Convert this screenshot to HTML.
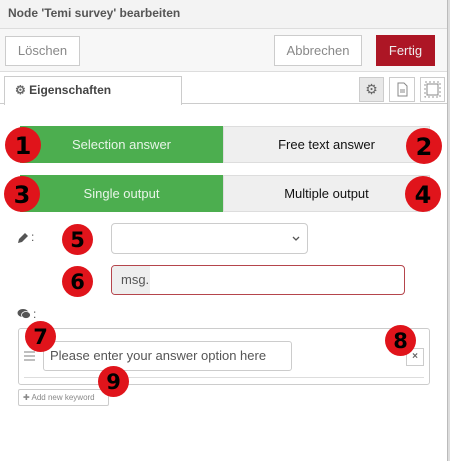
<!DOCTYPE html>
<html><head><meta charset="utf-8"><style>
*{box-sizing:border-box;margin:0;padding:0}
body{width:450px;height:461px;background:#fff;font-family:"Liberation Sans",sans-serif;position:relative;overflow:hidden}
.a{position:absolute}
.c{position:absolute;width:36px;height:36px;border-radius:50%;background:#e0141b;color:#000;font-weight:bold;font-size:24px;text-align:center;line-height:38px;font-family:"DejaVu Sans",sans-serif}
.cs{width:31px;height:31px;line-height:32px;font-size:21px}
</style></head><body>
<div class="a" style="left:0;top:0;width:447px;height:29px;background:#f3f3f3;border-bottom:1px solid #ddd"></div>
<div class="a" style="left:8px;top:6px;font-size:12px;font-weight:bold;color:#555">Node 'Temi survey' bearbeiten</div>
<div class="a" style="left:0;top:29px;width:447px;height:43px;background:#f7f7f7;border-bottom:1px solid #ddd"></div>
<div class="a" style="left:5px;top:36px;width:75px;height:30px;background:#fff;border:1px solid #ccc;font-size:13px;color:#888;text-align:center;line-height:28px">Löschen</div>
<div class="a" style="left:274px;top:35px;width:88px;height:31px;background:#fff;border:1px solid #ccc;font-size:13px;color:#888;text-align:center;line-height:29px">Abbrechen</div>
<div class="a" style="left:376px;top:35px;width:59px;height:31px;background:#ad1625;font-size:13px;color:#eee;text-align:center;line-height:31px">Fertig</div>
<div class="a" style="left:0;top:72px;width:447px;height:32px;background:#fff;border-bottom:1px solid #ccc"></div>
<div class="a" style="left:4px;top:76px;width:178px;height:29px;background:#fff;border:1px solid #ccc;border-bottom:none;font-size:12px;font-weight:bold;color:#444;line-height:26px;padding-left:10px"><span style="color:#666">⚙</span> Eigenschaften</div>
<div class="a" style="left:359px;top:77px;width:25px;height:25px;background:#e8e8e8;border:1px solid #ccc;text-align:center;line-height:22px;color:#666;font-size:14px">⚙</div>
<div class="a" style="left:389px;top:77px;width:26px;height:25px;background:#fff;border:1px solid #ccc"><svg width="24" height="23"><path d="M8 5h6l3 3v10H8z" fill="none" stroke="#888"/><path d="M10 12h5M10 14h5" stroke="#888"/></svg></div>
<div class="a" style="left:420px;top:77px;width:25px;height:25px;background:#fff;border:1px solid #ccc"><svg width="23" height="23"><rect x="6" y="6" width="11" height="11" fill="none" stroke="#888"/><rect x="4" y="4" width="15" height="15" fill="none" stroke="#999" stroke-dasharray="2 2"/></svg></div>
<div class="a" style="left:447px;top:0;width:3px;height:461px;background:#ddd;border-left:1px solid #bbb"></div>
<div class="a" style="left:20px;top:126px;width:203px;height:37px;background:#4cae4f;color:#e8f5e8;font-size:13px;text-align:center;line-height:37px">Selection answer</div>
<div class="a" style="left:223px;top:126px;width:207px;height:37px;background:#efefef;border:1px solid #ddd;color:#111;font-size:13px;text-align:center;line-height:35px">Free text answer</div>
<div class="a" style="left:20px;top:175px;width:203px;height:37px;background:#4cae4f;color:#e8f5e8;font-size:13px;text-align:center;line-height:37px">Single output</div>
<div class="a" style="left:223px;top:175px;width:207px;height:37px;background:#efefef;border:1px solid #ddd;color:#111;font-size:13px;text-align:center;line-height:35px">Multiple output</div>
<div class="c" style="left:5px;top:127px">1</div>
<div class="c" style="left:406px;top:128px">2</div>
<div class="c" style="left:4px;top:176px">3</div>
<div class="c" style="left:405px;top:176px">4</div>
<svg class="a" style="left:17px;top:232px" width="12" height="12"><path d="M1 11l1-4 6-6 3 3-6 6z" fill="#555"/></svg>
<div class="a" style="left:31px;top:230px;font-size:12px;color:#555">:</div>
<div class="c cs" style="left:62px;top:224px">5</div>
<div class="a" style="left:111px;top:223px;width:197px;height:31px;border:1px solid #ccc;border-radius:4px;background:#fff"><svg class="a" style="right:7px;top:12px" width="8" height="6"><path d="M1 1l3 3 3-3" fill="none" stroke="#555" stroke-width="1.3"/></svg></div>
<div class="c cs" style="left:62px;top:266px">6</div>
<div class="a" style="left:111px;top:265px;width:294px;height:30px;border:1px solid #b5454c;border-radius:4px;background:#fff;overflow:hidden"><div style="width:38px;height:28px;background:#eee;font-size:13px;color:#555;line-height:28px;padding-left:9px">msg.</div></div>
<svg class="a" style="left:17px;top:308px" width="14" height="12"><ellipse cx="6" cy="5" rx="5.5" ry="4" fill="#555"/><ellipse cx="9" cy="7" rx="4.5" ry="3.5" fill="#555" stroke="#fff" stroke-width="0.8"/></svg>
<div class="a" style="left:33px;top:307px;font-size:12px;color:#555">:</div>
<div class="a" style="left:18px;top:328px;width:412px;height:57px;border:1px solid #ccc;border-radius:3px"></div>
<div class="a" style="left:24px;top:377px;width:400px;height:1px;background:#ddd"></div>
<svg class="a" style="left:24px;top:351px" width="12" height="10"><path d="M0 1h11M0 5h11M0 9h11" stroke="#999" stroke-width="1.3"/></svg>
<div class="a" style="left:43px;top:341px;width:249px;height:30px;border:1px solid #ccc;border-radius:3px;font-size:13px;color:#555;line-height:28px;padding-left:6px">Please enter your answer option here</div>
<div class="a" style="left:406px;top:348px;width:18px;height:18px;border:1px solid #ccc;font-size:10px;color:#666;text-align:center;line-height:16px;font-weight:bold">×</div>
<div class="a" style="left:18px;top:389px;width:91px;height:17px;border:1px solid #ccc;border-radius:2px;font-size:8px;color:#888;line-height:15px;padding-left:4px">✚ Add new keyword</div>
<div class="c cs" style="left:25px;top:321px">7</div>
<div class="c cs" style="left:385px;top:325px">8</div>
<div class="c cs" style="left:98px;top:366px">9</div>
</body></html>
